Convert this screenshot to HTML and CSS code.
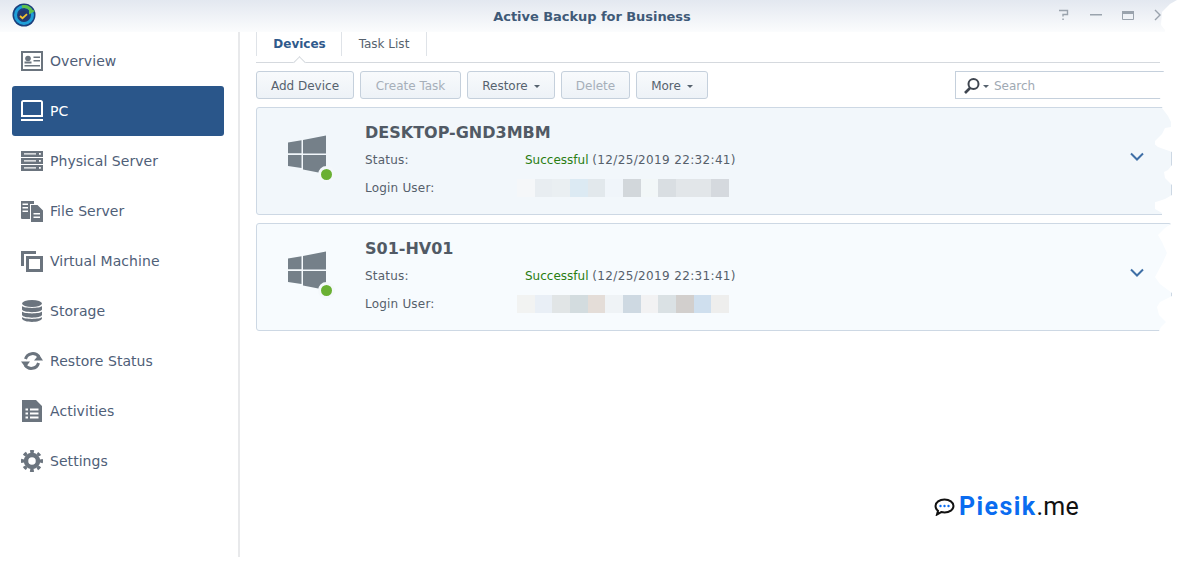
FILE: index.html
```html
<!DOCTYPE html>
<html lang="en">
<head>
<meta charset="utf-8">
<title>Active Backup for Business</title>
<link rel="stylesheet" href="styles.css">
</head>
<body>
<div class="app">
  <header class="titlebar">
    <svg class="logo" viewBox="0 0 24 24" width="24" height="24">
      <circle cx="12" cy="12" r="11.500" fill="#1c3f7c"/>
      <circle cx="12" cy="12" r="8.500" fill="none" stroke="#1f9fd8" stroke-width="3"/>
      <path d="M10 3.700a8.500 8.500 0 0 1 9 3.500" fill="none" stroke="#5fc24a" stroke-width="3"/>
      <path d="M17 5l6 3-6 3.500z" fill="#5fc24a"/>
      <circle cx="11.500" cy="13" r="5.500" fill="#23386e"/>
      <path d="M8 13l2.500 2.200 4.500-4" fill="none" stroke="#f2c230" stroke-width="1.800"/>
    </svg>
    <div class="app-title">Active Backup for Business</div>
    <div class="win-controls">
      <svg viewBox="0 0 12 12" width="12" height="12"><path d="M1 1.500h8.500v4H5v2" fill="none" stroke="#9aa3ad" stroke-width="1.400"/><rect x="4.300" y="9.500" width="1.500" height="1.500" fill="#9aa3ad"/></svg>
      <svg viewBox="0 0 12 12" width="12" height="12"><rect y="5" width="12" height="1.500" fill="#9aa3ad"/></svg>
      <svg viewBox="0 0 12 12" width="12" height="12"><path d="M.5 2.500h11v8H.500z" fill="none" stroke="#9aa3ad"/><rect y="2" width="12" height="3" fill="#9aa3ad"/></svg>
      <svg viewBox="0 0 12 12" width="12" height="12"><path d="M1 1l5 5-5 5" fill="none" stroke="#9aa3ad" stroke-width="1.400"/></svg>
    </div>
  </header>
  <div class="workspace">
    <nav class="sidebar">
      <div class="nav-item">
        <svg class="nav-icon" viewBox="0 0 22 22"><path fill-rule="evenodd" d="M0 1h22v20H0zM2 3v16h18V3z"/><circle cx="7" cy="8.500" r="2.800"/><path d="M3.500 11.500h7v2h-7zM12.500 6.500H19v1.500h-6.500zM12.500 10H19v1.500h-6.500zM3.500 15H19v1.500H3.500z"/></svg>
        <span>Overview</span>
      </div>
      <div class="nav-item active">
        <svg class="nav-icon" viewBox="0 0 22 22"><path fill-rule="evenodd" d="M2.500 0h17A2.500 2.500 0 0 1 22 2.500V17H0V2.500A2.500 2.500 0 0 1 2.500 0zM2 2v13h18V2z"/><rect y="19" width="22" height="2"/></svg>
        <span>PC</span>
      </div>
      <div class="nav-item">
        <svg class="nav-icon" viewBox="0 0 22 22"><path fill-rule="evenodd" d="M0 1h22v6H0zM3 3.300v1.300h12V3.300zM18 3h1.800v1.800H18zM0 8h22v6H0zM3 10.300v1.300h12v-1.300zM18 10h1.800v1.800H18zM0 15h22v6H0zM3 17.300v1.300h12v-1.300zM18 17h1.800v1.800H18z"/></svg>
        <span>Physical Server</span>
      </div>
      <div class="nav-item">
        <svg class="nav-icon" viewBox="0 0 22 22"><path fill-rule="evenodd" d="M0 1h13v3H9v15H1a1 1 0 0 1-1-1zM1.500 3.500V5H7V3.500zM1.500 7v1.500H7V7zM1.500 10.500V12H7v-1.500z"/><path fill-rule="evenodd" d="M10 5h6.500l5.500 5.500V22H10zM12.500 13v1.500H19V13zM12.500 16.500V18H19v-1.500z"/></svg>
        <span>File Server</span>
      </div>
      <div class="nav-item">
        <svg class="nav-icon" viewBox="0 0 22 22"><path d="M0 1h15v3H3v12H0z"/><path fill-rule="evenodd" d="M5 6h17v16H5zM8 9v10h11V9z"/></svg>
        <span>Virtual Machine</span>
      </div>
      <div class="nav-item">
        <svg class="nav-icon" viewBox="0 0 22 22"><ellipse cx="11" cy="3.500" rx="10" ry="3.500"/><path d="M1 6c2 2.500 18 2.500 20 0v3.500c-1 3.500-19 3.500-20 0zM1 11.500c2 2.500 18 2.500 20 0V15c-1 3.500-19 3.500-20 0zM1 17c2 2.500 18 2.500 20 0v1.500c-1 4.500-19 4.500-20 0z"/></svg>
        <span>Storage</span>
      </div>
      <div class="nav-item">
        <svg class="nav-icon" viewBox="0 0 22 22"><path class="ring" d="M4.500 9A7.500 7.500 0 0 1 18 7"/><path class="ring" d="M17.500 13A7.500 7.500 0 0 1 4 15"/><path d="M13 10.500h9l-4-6zM0 11.500h9l-4.500 6z"/></svg>
        <span>Restore Status</span>
      </div>
      <div class="nav-item">
        <svg class="nav-icon" viewBox="0 0 22 22"><path fill-rule="evenodd" d="M1 0h14l6 6v16H1zM4.500 8.500V10.500h2.500V8.500zM9 8.500V10.500h8.500V8.500zM4.500 12.500v2h2.500v-2zM9 12.500v2h8.500v-2zM4.500 16.500v2h2.500v-2zM9 16.500v2h8.500v-2z"/></svg>
        <span>Activities</span>
      </div>
      <div class="nav-item">
        <svg class="nav-icon" viewBox="0 0 22 22"><circle class="gear-body" cx="11" cy="11" r="6"/><circle class="gear-teeth" cx="11" cy="11" r="9.500" pathLength="48" transform="rotate(-11 11 11)"/></svg>
        <span>Settings</span>
      </div>
    </nav>
    <main class="main">
      <div class="tabs">
        <div class="tab current">Devices</div>
        <div class="tab">Task List</div>
      </div>
      <div class="toolbar">
        <button class="btn w-add">Add Device</button>
        <button class="btn w-create off">Create Task</button>
        <button class="btn w-restore">Restore<i class="caret"></i></button>
        <button class="btn w-delete off">Delete</button>
        <button class="btn w-more">More<i class="caret"></i></button>
        <div class="search">
          <svg viewBox="0 0 18 18" width="18" height="18"><circle cx="10.500" cy="7" r="5" fill="none" stroke="#3f4650" stroke-width="2"/><path d="M7 11l-5 5" stroke="#3f4650" stroke-width="2.600"/></svg>
          <i class="caret dark"></i>
          <span>Search</span>
        </div>
      </div>
      <section class="card">
        <div class="os">
          <svg viewBox="0 0 38 40" width="38" height="40"><path fill="#758089" d="M0 8.500l13.500-2.200v13H0zM15 6L38 1.500v18H15zM0 21h13.500v13L0 32zM15 21h23v19L15 35.500z"/></svg>
          <i class="dot"></i>
        </div>
        <div class="info">
          <h2>DESKTOP-GND3MBM</h2>
          <div class="row"><span class="lbl">Status:</span><span><em>Successful</em> <span class="stamp">(12/25/2019 22:32:41)</span></span></div>
          <div class="row"><span class="lbl">Login User:</span>
            <span class="blur"><i class="c1"></i><i class="c2"></i><i class="c3"></i><i class="c4"></i><i class="c5"></i><i class="c6"></i><i class="c7"></i><i class="c8"></i><i class="c9"></i><i class="c10"></i><i class="c11"></i><i class="c12"></i></span></div>
        </div>
        <svg class="chev" viewBox="0 0 14 10" width="14" height="10"><path d="M1 1.500l6 6 6-6" fill="none" stroke="#3f6fa6" stroke-width="2"/></svg>
      </section>
      <section class="card light">
        <div class="os">
          <svg viewBox="0 0 38 40" width="38" height="40"><path fill="#758089" d="M0 8.500l13.500-2.200v13H0zM15 6L38 1.500v18H15zM0 21h13.500v13L0 32zM15 21h23v19L15 35.500z"/></svg>
          <i class="dot"></i>
        </div>
        <div class="info">
          <h2>S01-HV01</h2>
          <div class="row"><span class="lbl">Status:</span><span><em>Successful</em> <span class="stamp">(12/25/2019 22:31:41)</span></span></div>
          <div class="row"><span class="lbl">Login User:</span>
            <span class="blur"><i class="d1"></i><i class="d2"></i><i class="d3"></i><i class="d4"></i><i class="d5"></i><i class="d6"></i><i class="d7"></i><i class="d8"></i><i class="d9"></i><i class="d10"></i><i class="d11"></i><i class="d12"></i></span></div>
        </div>
        <svg class="chev" viewBox="0 0 14 10" width="14" height="10"><path d="M1 1.500l6 6 6-6" fill="none" stroke="#3f6fa6" stroke-width="2"/></svg>
      </section>
    </main>
  </div>
  <svg class="torn" viewBox="1155 0 28 345" width="28" height="345" aria-hidden="true">
    <path fill="#fff" d="M1183 0H1177L1170 4 1162 12 1161 25 1165 30 1160 60V65L1164 72V80L1160 98 1163 106 1162 108 1165 112 1168 116 1171 122V127L1165 128 1162 134 1153 143 1158 147 1172 152V165L1168 170 1164 172 1165 178 1172 185V195L1165 199 1153 203 1155 209 1162 213V216L1170 222 1171 224 1165 228 1158 235 1162 242 1167 253 1163 262 1155 277 1160 284 1168 290 1172 293V296L1160 302 1157 307 1159 315 1166 322 1161 327 1159 331V345H1183Z"/>
  </svg>
  <div class="mark">
    <svg viewBox="0 0 21 18" width="21" height="18"><path d="M10.500 1.500c5 0 9 2.800 9 6.500s-4 6.500-9 6.500c-1.200 0-2.300-.2-3.300-.4L3 16.500l1-3.700C2.400 11.600 1.500 9.900 1.500 8c0-3.700 4-6.500 9-6.500z" fill="#fff" stroke="#111" stroke-width="2"/><circle cx="6.500" cy="8" r="1.200" fill="#0a6cf0"/><circle cx="10.500" cy="8" r="1.200" fill="#0a6cf0"/><circle cx="14.500" cy="8" r="1.200" fill="#0a6cf0"/></svg>
    <span class="mark-text"><b>Piesik</b>.me</span>
  </div>
</div>
</body>
</html>
```
FILE: styles.css
```css
* { box-sizing: border-box; }
html, body { margin: 0; height: 100%; background: #fff; overflow: hidden; }
body { font-family: "DejaVu Sans", Verdana, sans-serif; font-size: 12px; color: #4f5b66; }
.app { position: relative; width: 1183px; height: 575px; }

.titlebar { position: relative; display: flex; align-items: center; justify-content: center; height: 32px; background: linear-gradient(#e3e8f0, #fbfcfd); }
.logo { position: absolute; left: 12px; top: 3px; }
.app-title { font-size: 13px; font-weight: bold; color: #3f5a78; letter-spacing: -.05px; padding-left: 1px; }
.win-controls { position: absolute; left: 1058px; top: 9px; display: flex; gap: 20px; }

.workspace { display: flex; height: 525px; }
.sidebar { width: 240px; padding: 4px 0 0 12px; border-right: 2px solid #e8e9eb; }
.nav-item { display: flex; align-items: center; gap: 7px; width: 212px; height: 50px; padding-left: 9px; border-radius: 3px; font-size: 14px; letter-spacing: .05px; color: #4f6078; }
.nav-icon { width: 22px; height: 22px; fill: #6b747e; flex: none; }
.nav-item.active { background: #2a568a; color: #fff; }
.active .nav-icon { fill: #fff; }
.ring { fill: none; stroke: #6b747e; stroke-width: 3; }
.gear-body { fill: none; stroke: #6b747e; stroke-width: 4.500; }
.gear-teeth { fill: none; stroke: #6b747e; stroke-width: 3; stroke-dasharray: 3 3; }

.main { flex: 1; padding-left: 16px; min-width: 0; }
.tabs { display: flex; width: 904px; height: 31px; border-bottom: 1px solid #d5d9de; position: relative; }
.tab { width: 85px; height: 24px; display: flex; align-items: center; justify-content: center; border-right: 1px solid #dfe3e8; font-size: 12px; color: #56626e; }
.tab.current { width: 86px; border-left: 1px solid #dfe3e8; font-weight: bold; color: #2f5a8c; position: relative; height: 24px; padding-left: 1px; }
.tab.current::after { content: ""; position: absolute; left: 38px; top: 26px; width: 8px; height: 8px; background: #fff; border-left: 1px solid #d5d9de; border-top: 1px solid #d5d9de; transform: rotate(45deg); }

.toolbar { display: flex; gap: 6px; width: 908px; height: 28px; margin-top: 8px; }
.btn { height: 28px; padding: 1px 0 0; border: 1px solid #c5d0dc; border-radius: 3px; background: linear-gradient(#f8fafc, #edf2f7); font: 12px "DejaVu Sans", Verdana, sans-serif; color: #56626e; display: flex; align-items: center; justify-content: center; }
.btn.off { color: #a6afb9; }
.w-add { width: 98px; } .w-create { width: 101px; } .w-restore { width: 88px; } .w-delete { width: 69px; } .w-more { width: 72px; }
.caret { display: inline-block; margin-left: 6px; margin-top: 1px; border: 3px solid transparent; border-top: 3px solid #56626e; border-bottom: 0; }
.search { display: flex; align-items: center; width: 209px; margin-left: auto; border: 1px solid #c5d0dc; border-right: 0; padding: 1px 0 0 7px; color: #a0a9b3; }
.search .caret { margin-left: 2px; margin-right: 5px; }

.card { display: flex; width: 916px; height: 108px; margin-top: 8px; background: #f2f7fb; border: 1px solid #cdd8e4; border-radius: 3px; position: relative; }
.card.light { background: #f7fbfe; }
.os { position: relative; width: 108px; flex: none; padding: 26px 0 0 31px; }
.os svg { display: block; }
.dot { position: absolute; left: 61px; top: 58px; width: 17px; height: 17px; border-radius: 50%; background: #6ab033; border: 3px solid #f4f8fb; }
.info { flex: 1; padding-top: 14px; }
.info h2 { margin: 0 0 2px; font-size: 16px; line-height: 22px; font-weight: bold; color: #515a65; }
.row { display: flex; height: 28px; align-items: center; font-size: 12px; color: #56606b; }
.lbl { width: 160px; flex: none; letter-spacing: .2px; }
.row em { font-style: normal; color: #2a7d12; }
.stamp { letter-spacing: .35px; }
.blur { display: flex; width: 212px; height: 18px; margin-left: -8px; }
.blur i { flex: 1; height: 18px; }
.c1 { background: #f5f7f9; } .c2 { background: #e8edf1; } .c3 { background: #eaeff2; } .c4 { background: #dceaf3; } .c5 { background: #e2e8ec; } .c6 { background: #f0f5fa; } .c7 { background: #d2d7db; } .c8 { background: #f2f7f8; } .c9 { background: #d9dee2; } .c10 { background: #e2e6e9; } .c11 { background: #e2e6e9; } .c12 { background: #d5d9de; }
.d1 { background: #f2f3f2; } .d2 { background: #e9eff6; } .d3 { background: #e1e5e6; } .d4 { background: #d3dcdf; } .d5 { background: #e4ddd8; } .d6 { background: #eff3f6; } .d7 { background: #ced9e2; } .d8 { background: #f2f2f3; } .d9 { background: #dae1e4; } .d10 { background: #d2cfcd; } .d11 { background: #cfdfee; } .d12 { background: #eeeeed; }
.chev { position: absolute; left: 873px; top: 44px; }

.torn { position: absolute; left: 1155px; top: 0; }
.mark { position: absolute; left: 934px; top: 494px; display: flex; align-items: center; gap: 4px; font-family: Roboto, sans-serif; font-size: 25px; line-height: 26px; color: #111; }
.mark b { color: #0a6cf0; font-weight: 700; letter-spacing: 1.400px; }
.mark-text { letter-spacing: .3px; }
```
